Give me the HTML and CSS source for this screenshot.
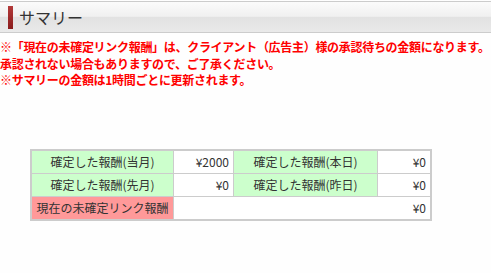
FILE: index.html
```html
<!DOCTYPE html>
<html lang="ja">
<head>
  <meta charset="UTF-8">
  <title>サマリー</title>
  <link rel="stylesheet" href="styles.css">
</head>
<body>
  <!-- page heading -->
  <div class="heading">
    <span class="heading-mark"></span>
    <h2>サマリー</h2>
  </div>

  <!-- notices -->
  <div class="notes">
    <p>※「現在の未確定リンク報酬」は、クライアント（広告主）様の承認待ちの金額になります。</p>
    <p>承認されない場合もありますので、ご了承ください。</p>
    <p>※サマリーの金額は1時間ごとに更新されます。</p>
  </div>

  <!-- summary table -->
  <table class="summary">
    <tr>
      <th class="label">確定した報酬(当月)</th>
      <td class="value value-a">¥2000</td>
      <th class="label label-b">確定した報酬(本日)</th>
      <td class="value value-b">¥0</td>
    </tr>
    <tr>
      <th class="label">確定した報酬(先月)</th>
      <td class="value">¥0</td>
      <th class="label">確定した報酬(昨日)</th>
      <td class="value">¥0</td>
    </tr>
    <tr>
      <th class="label pending">現在の未確定リンク報酬</th>
      <td class="value" colspan="3">¥0</td>
    </tr>
  </table>
</body>
</html>
```

FILE: styles.css
```css
body {
  margin: 0;
  background-color: #fefefe;
  font-family: "Noto Sans CJK JP", "Noto Sans", sans-serif;
  font-size: 12px;
  color: #333;
}
.heading {
  display: flex;
  align-items: center;
  height: 30px;
  margin-top: 1px;
  border-top: 1px solid #ccc;
  border-bottom: 1px solid #ccc;
  background: linear-gradient(to bottom, #fbfbfb 0%, #f0f0f0 48%, #e2e2e2 50%, #e9e9e9 100%);
}
.heading-mark {
  width: 5px;
  height: 23px;
  margin-left: 8px;
  background: linear-gradient(to bottom, #b33a3a, #8a1c1c);
}
.heading h2 {
  margin: 0 0 0 6px;
  font-size: 16px;
  font-weight: normal;
  color: #333;
  line-height: 20px;
}
.notes {
  margin-top: 6px;
  color: #f00;
  font-weight: bold;
  font-size: 12px;
  line-height: 16.5px;
  letter-spacing: -0.3px;
}
.notes p {
  margin: 0;
  white-space: nowrap;
}
.summary {
  margin: 60px 0 0 30px;
  border-collapse: collapse;
  border: 2px solid #ccc;
}
.summary th,
.summary td {
  border: 1px solid #ccc;
  height: 22px;
  padding: 0 4px;
  font-size: 12px;
  font-weight: normal;
  color: #333;
  white-space: nowrap;
}
.label {
  width: 133px;
  background-color: #ccffcc;
  text-align: center;
}
.label-b {
  width: 135px;
}
.value {
  background-color: #fff;
  text-align: right;
}
.value-a {
  width: 51px;
}
.value-b {
  width: 44px;
}
.pending {
  background-color: #ff9999;
}
```
